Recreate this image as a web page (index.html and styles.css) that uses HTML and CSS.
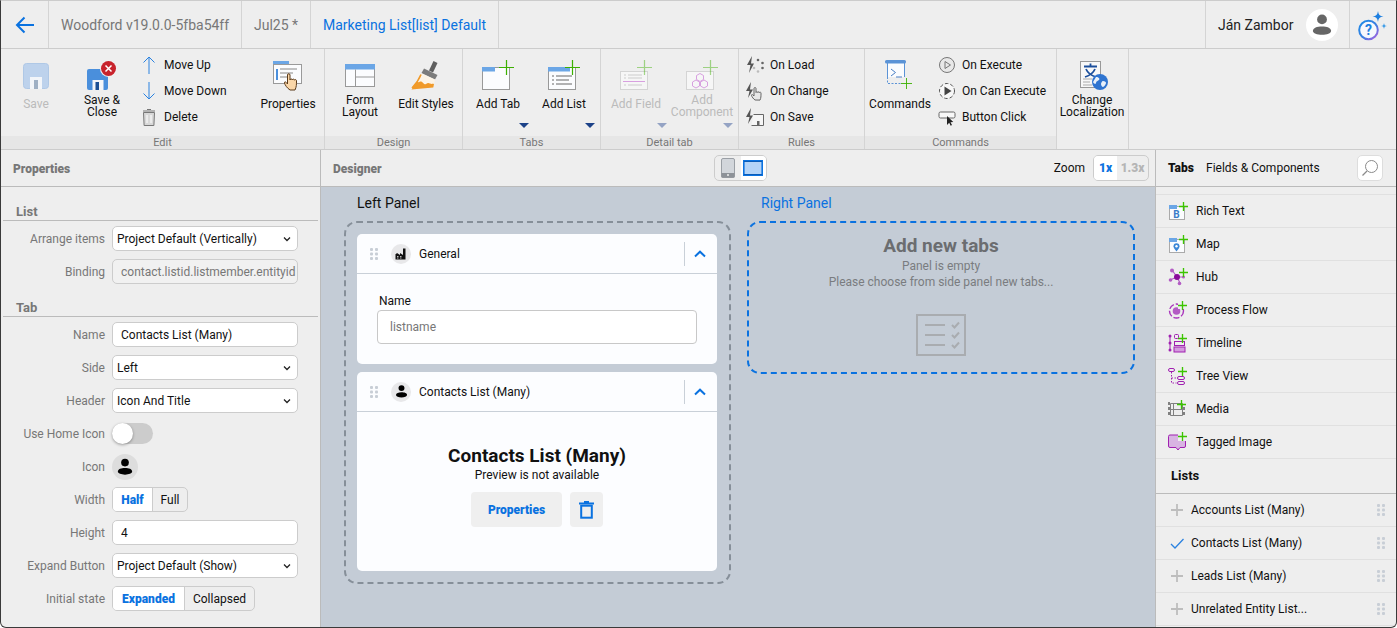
FILE: index.html
```html
<!DOCTYPE html>
<html lang="en">
<head>
  <meta charset="UTF-8">
  <title>Woodford Form Designer</title>
  <link rel="stylesheet" href="styles.css">
</head>
<body>

<svg class="defs" width="0" height="0">
  <defs>
    <symbol id="grip" viewBox="0 0 8 12">
      <g fill="#c8ced6">
        <rect x="0" y="0" width="3" height="3" rx="1"/><rect x="5" y="0" width="3" height="3" rx="1"/>
        <rect x="0" y="4.500" width="3" height="3" rx="1"/><rect x="5" y="4.500" width="3" height="3" rx="1"/>
        <rect x="0" y="9" width="3" height="3" rx="1"/><rect x="5" y="9" width="3" height="3" rx="1"/>
      </g>
    </symbol>
    <symbol id="person" viewBox="0 0 20 20">
      <circle cx="10" cy="6" r="3.500"/>
      <path d="M3.500 14.200c0-2.200 3-3.200 6.500-3.200s6.500 1 6.500 3.200c0 1.600-3 2.800-6.500 2.800s-6.500-1.200-6.500-2.800z"/>
    </symbol>
    <symbol id="chev" viewBox="0 0 12 8">
      <path d="M1 6.500L6 1.700l5 4.800" fill="none" stroke="#0a72e0" stroke-width="2"/>
    </symbol>
    <symbol id="gplus" viewBox="0 0 16 16">
      <path d="M8 0v16M0 8h16" stroke="#3cb000" stroke-width="1.300" fill="none"/>
    </symbol>
    <symbol id="tplus" viewBox="0 0 16 16">
      <path d="M8 0v16M0 8h16" stroke="#3cc400" stroke-width="2.400" fill="none"/>
    </symbol>
    <symbol id="splus" viewBox="0 0 14 14">
      <path d="M7 1v12M1 7h12" stroke="#bdbdbd" stroke-width="1.800" fill="none"/>
    </symbol>
  </defs>
</svg>

<div class="app">

  <!-- top bar -->
  <header class="topbar">
    <a class="back">
      <svg width="20" height="18" viewBox="0 0 20 18"><path d="M19 9H2M9.500 1.500L2 9l7.500 7.500" fill="none" stroke="#0a72e0" stroke-width="2"/></svg>
    </a>
    <div class="crumb crumb-ver">Woodford v19.0.0-5fba54ff</div>
    <div class="crumb crumb-jul">Jul25 *</div>
    <div class="crumb crumb-form">Marketing List[list] Default</div>
    <div class="topbar-user">
      <span class="user-name">Ján Zambor</span>
      <span class="avatar"><svg width="28" height="28" fill="#666"><use href="#person"/></svg></span>
    </div>
    <div class="topbar-help">
      <svg width="32" height="32" viewBox="0 0 32 32">
        <defs><linearGradient id="ring" x1="0" y1="0" x2="1" y2="1"><stop offset="0" stop-color="#1d8be8"/><stop offset=".55" stop-color="#3a7fe0"/><stop offset="1" stop-color="#b35fe0"/></linearGradient></defs>
        <circle cx="11.500" cy="20" r="9.300" fill="#f6f8fc" stroke="url(#ring)" stroke-width="2"/>
        <text x="11.500" y="25" text-anchor="middle" class="help-q">?</text>
        <path d="M21 1c.7 4 1.500 4.800 5.500 5.500-4 .7-4.800 1.500-5.500 5.500-.7-4-1.500-4.800-5.500-5.500 4-.7 4.800-1.500 5.500-5.500z" fill="#1d7fe0"/>
        <path d="M27 13c.3 2 .9 2.700 3 3-2.100.3-2.700 1-3 3-.3-2-.9-2.700-3-3 2.100-.3 2.700-1 3-3z" fill="#3a9be8"/>
      </svg>
    </div>
  </header>

  <!-- ribbon -->
  <div class="ribbon">
    <section class="group group-edit">
      <div class="group-body">
        <button class="rb-btn is-off">
          <svg class="rb-icon" viewBox="0 0 32 32"><rect x="3.500" y="3.500" width="25" height="25" rx="3" fill="#bdd2ec" stroke="#afc8e6"/><rect x="10" y="17" width="12" height="12" fill="#f2f5f9"/><rect x="14" y="20" width="4" height="9" fill="#9fb0c4"/></svg>
          <span class="rb-label">Save</span>
        </button>
        <button class="rb-btn">
          <svg class="rb-icon" viewBox="0 0 32 32"><rect x="1" y="9" width="21" height="21" rx="2" fill="#4a8fdc"/><rect x="6.500" y="20" width="11" height="10" fill="#f4f6f9"/><rect x="9.500" y="22" width="3.500" height="8" fill="#1c4f94"/><circle cx="22.500" cy="8.500" r="8.500" fill="#f0f0f0"/><circle cx="22.500" cy="8.500" r="7.500" fill="#c8232c"/><path d="M19.500 5.500l6 6M25.500 5.500l-6 6" stroke="#fff" stroke-width="1.500"/></svg>
          <span class="rb-label rb-two">Save &amp;<br>Close</span>
        </button>
        <div class="rb-col rb-col-edit">
          <div class="rb-small">
            <svg width="20" height="20" viewBox="0 0 20 20"><path d="M10 2v17M4.500 7.500L10 2l5.500 5.500" fill="none" stroke="#2a82e0" stroke-width="1"/></svg>
            <span>Move Up</span>
          </div>
          <div class="rb-small">
            <svg width="20" height="20" viewBox="0 0 20 20"><path d="M10 1v17M4.500 12.500L10 18l5.500-5.500" fill="none" stroke="#2a82e0" stroke-width="1"/></svg>
            <span>Move Down</span>
          </div>
          <div class="rb-small">
            <svg width="20" height="20" viewBox="0 0 20 20"><path d="M4.500 5.500h11l-.6 13h-9.800z" fill="#d8d8d8" stroke="#777"/><path d="M4 4h12M8 2.500h4" stroke="#777" fill="none"/><path d="M8 8v8M12 8v8" stroke="#fff"/></svg>
            <span>Delete</span>
          </div>
        </div>
        <button class="rb-btn">
          <svg class="rb-icon" viewBox="0 0 32 32"><rect x="1" y="1" width="16" height="4" fill="#6ba6e6"/><rect x="1.500" y="4.500" width="28" height="19" fill="#fbfcfe" stroke="#9a9a9a"/><rect x="4" y="9" width="2" height="11" fill="#4a8fdc"/><path d="M8 9h17M8 13h13M8 17h9" stroke="#888"/><path d="M18 30c-3-2-5-5-5.500-7-.3-1.300 1-1.500 1.800-.5l1.200 1.500v-9c0-1.700 2.500-1.700 2.500 0v5c0-1.400 2.300-1.400 2.300 0 0-1.200 2.200-1.200 2.200.2 .2-1 2-.8 2 .6 0 3.500 0 6-1.500 9.200z" fill="#fbd7a8" stroke="#5b3a1a"/></svg>
          <span class="rb-label">Properties</span>
        </button>
      </div>
      <div class="group-name">Edit</div>
    </section>

    <section class="group">
      <div class="group-body">
        <button class="rb-btn">
          <svg class="rb-icon" viewBox="0 0 32 32"><rect x="1.500" y="4.500" width="29" height="22" fill="#fbfcfe" stroke="#999"/><rect x="1" y="4" width="30" height="5.500" fill="#6ba6e6"/><path d="M11.500 9.500v17M11.500 17h19" stroke="#999"/></svg>
          <span class="rb-label rb-two">Form<br>Layout</span>
        </button>
        <button class="rb-btn">
          <svg class="rb-icon" viewBox="0 0 32 32"><path d="M23.500 1l4 2-4.500 9.500-4-2z" fill="#5f5f5f"/><path d="M14 8.500l13.500 6.500-2.500 4.500-13.500-6.500z" fill="#7c7c7c"/><path d="M11.500 13.500l13.500 6-1.500 6.500c-7 1-15 .8-22 2 4-3.500 7.500-8 10-14.500z" fill="#fdf4e6"/><path d="M7 21.500c2 2 3-1 5 .5s2 3 4 2 2-1.500 4-.5 2 0 4 .5l-.7 3.500-21.800 2z" fill="#f09a2a"/><path d="M11 14.500c-2 5-5 9.500-9 13.500" stroke="#f09a2a" stroke-width="1.600" fill="none"/></svg>
          <span class="rb-label">Edit Styles</span>
        </button>
      </div>
      <div class="group-name">Design</div>
    </section>

    <section class="group">
      <div class="group-body">
        <button class="rb-btn">
          <svg class="rb-icon" viewBox="0 0 32 32"><rect x=".5" y="7.500" width="27" height="22" fill="#fbfcfe" stroke="#999"/><rect x="0" y="7" width="13" height="4.500" fill="#6ba6e6"/><use href="#gplus" x="17" y="0" width="15" height="15"/></svg>
          <span class="rb-label">Add Tab</span>
          <i class="caret"></i>
        </button>
        <button class="rb-btn">
          <svg class="rb-icon" viewBox="0 0 32 32"><rect x=".5" y="7.500" width="27" height="22" fill="#fbfcfe" stroke="#999"/><rect x="0" y="7" width="22" height="4.500" fill="#6ba6e6"/><path d="M4 16h2M8 16h16M4 20h2M8 20h13M4 24h2M8 24h16" stroke="#666"/><use href="#gplus" x="17" y="0" width="15" height="15"/></svg>
          <span class="rb-label">Add List</span>
          <i class="caret"></i>
        </button>
      </div>
      <div class="group-name">Tabs</div>
    </section>

    <section class="group">
      <div class="group-body">
        <button class="rb-btn is-off">
          <svg class="rb-icon" viewBox="0 0 32 32"><rect x=".5" y="11.500" width="27" height="18" fill="#f6f6f6" stroke="#d4d4d4"/><path d="M8 15h14M4 15h2M8 18h14M4 18h2M8 25h14M4 25h2" stroke="#ccc"/><path d="M3 21.500h22" stroke="#d8a0e0"/><use href="#gplus" x="17" y="0" width="15" height="15" opacity=".45"/></svg>
          <span class="rb-label">Add Field</span>
          <i class="caret"></i>
        </button>
        <button class="rb-btn is-off">
          <svg class="rb-icon" viewBox="0 0 32 32"><rect x=".5" y="11.500" width="27" height="18" fill="#f6f6f6" stroke="#d4d4d4"/><g fill="none" stroke="#d8a0e0"><path d="M14 13.500l3.500 2v4l-3.500 2-3.500-2v-4z"/><path d="M10 20l3.500 2v4l-3.500 2-3.500-2v-4z"/><path d="M18 20l3.500 2v4l-3.500 2-3.500-2v-4z"/></g><use href="#gplus" x="17" y="0" width="15" height="15" opacity=".45"/></svg>
          <span class="rb-label rb-two">Add<br>Component</span>
          <i class="caret caret-two"></i>
        </button>
      </div>
      <div class="group-name">Detail tab</div>
    </section>

    <section class="group group-rules">
      <div class="group-body">
        <div class="rb-col">
          <div class="rb-small">
            <svg width="20" height="20" viewBox="0 0 20 20"><path d="M7 1L2 10h3.500L4 18l5-9.500H6z" fill="#555"/><g fill="#666"><circle cx="13" cy="5" r="1.300"/><circle cx="17.500" cy="8" r="1.300"/><circle cx="17.500" cy="13" r="1.300"/></g><g fill="#bbb"><circle cx="13" cy="16.500" r="1.300"/><circle cx="9" cy="13" r="1.300"/></g></svg>
            <span>On Load</span>
          </div>
          <div class="rb-small">
            <svg width="20" height="20" viewBox="0 0 20 20"><path d="M6 1L1 10h3.500L3 17l5-8.500H5z" fill="#555"/><path d="M10 19c-1.500-1-3-3-3.500-4.500-.3-1 .8-1.300 1.500-.5l1 1V7.500c0-1.300 2-1.300 2 0v4c0-1 1.800-1 1.800 0 0-.9 1.700-.9 1.700 .1 .1-.7 1.500-.6 1.500 .5 0 3 0 5-1 7z" fill="#e8e8e8" stroke="#666"/></svg>
            <span>On Change</span>
          </div>
          <div class="rb-small">
            <svg width="20" height="20" viewBox="0 0 20 20"><path d="M6 1L1 10h3.500L3 17l5-8.500H5z" fill="#555"/><path d="M8.500 7.500h10v11h-12" fill="#f6f6f6" stroke="#666"/><rect x="12" y="14" width="2.500" height="4" fill="#666"/></svg>
            <span>On Save</span>
          </div>
        </div>
      </div>
      <div class="group-name">Rules</div>
    </section>

    <section class="group group-cmd">
      <div class="group-body">
        <button class="rb-btn">
          <svg class="rb-icon" viewBox="0 0 32 32"><path d="M3.500 3v14M20.500 3v14" fill="none" stroke="#5b93d6"/><path d="M3.500 17v6.500h14" fill="none" stroke="#5b93d6" stroke-dasharray="2 1.500"/><rect x="4" y="3" width="16" height="14" fill="#fbfcfe"/><rect x="1" y="0" width="21" height="3.500" rx="1.500" fill="#5b93d6"/><path d="M7 9l4.500 3.500L7 16M12 17h6" fill="none" stroke="#4a7fc4"/><use href="#gplus" x="17" y="18" width="11" height="11"/></svg>
          <span class="rb-label">Commands</span>
        </button>
        <div class="rb-col">
          <div class="rb-small">
            <svg width="20" height="20" viewBox="0 0 20 20"><circle cx="10" cy="10" r="7.500" fill="#e8e8e8" stroke="#777"/><path d="M8 6.500l5.500 3.500L8 13.500z" fill="none" stroke="#777"/></svg>
            <span>On Execute</span>
          </div>
          <div class="rb-small">
            <svg width="20" height="20" viewBox="0 0 20 20"><circle cx="10" cy="10" r="7.500" fill="#f8f8f8" stroke="#555" stroke-dasharray="3.500 2"/><path d="M7.500 5.500l7 4.500-7 4.500z" fill="#444"/></svg>
            <span>On Can Execute</span>
          </div>
          <div class="rb-small">
            <svg width="20" height="20" viewBox="0 0 20 20"><rect x="2" y="5" width="16" height="6" rx="1.500" fill="#f8f8f8" stroke="#666"/><path d="M10 9v9l2.200-2.200 1.500 3 1.300-.7-1.500-2.900 2.800-.2z" fill="#222"/></svg>
            <span>Button Click</span>
          </div>
        </div>
      </div>
      <div class="group-name">Commands</div>
    </section>

    <section class="group group-loc">
      <div class="group-body">
        <button class="rb-btn">
          <svg class="rb-icon" viewBox="0 0 32 32"><rect x="4.500" y="1.500" width="20" height="26" fill="#f8f8f8" stroke="#999"/><path d="M8 6.500h13M14.500 3.500v3M10 9c1.500 3.500 5 6.500 10 8M19 9c-1.500 3.500-5 6.500-10 8" stroke="#1c4f9c" stroke-width="1.800" fill="none"/><path d="M7 19h9M7 22h7M7 25h9" stroke="#aaa"/><circle cx="24" cy="22" r="8" fill="#2f74d0"/><path d="M20 17c3 0 4 2 3 3s-3 1-3 3-3 0-3-1M27 21c2 0 3 1 3 2s-2 4-3 4-2-2-2-3 1-3 2-3z" fill="#e8f0fa"/></svg>
          <span class="rb-label rb-two">Change<br>Localization</span>
        </button>
      </div>
    </section>
  </div>

  <main class="main">

    <!-- properties panel -->
    <aside class="props">
      <div class="panel-head"><b class="panel-title">Properties</b></div>
      <div class="props-body">
        <h3 class="sec sec-list">List</h3>
        <div class="rows">
          <div class="row"><label>Arrange items</label>
            <select class="field"><option>Project Default (Vertically)</option></select></div>
          <div class="row"><label>Binding</label>
            <input class="field field-off" value="contact.listid.listmember.entityid" readonly></div>
        </div>
        <h3 class="sec">Tab</h3>
        <div class="rows">
          <div class="row"><label>Name</label>
            <input class="field" value="Contacts List (Many)"></div>
          <div class="row"><label>Side</label>
            <select class="field"><option>Left</option></select></div>
          <div class="row"><label>Header</label>
            <select class="field"><option>Icon And Title</option></select></div>
          <div class="row"><label>Use Home Icon</label>
            <span class="toggle"><i></i></span></div>
          <div class="row"><label>Icon</label>
            <span class="icon-pick"><svg width="22" height="22" fill="#000"><use href="#person"/></svg></span></div>
          <div class="row"><label>Width</label>
            <div class="seg"><span class="seg-on seg-half">Half</span><span class="seg-full">Full</span></div></div>
          <div class="row"><label>Height</label>
            <input class="field" value="4"></div>
          <div class="row"><label>Expand Button</label>
            <select class="field"><option>Project Default (Show)</option></select></div>
          <div class="row"><label>Initial state</label>
            <div class="seg"><span class="seg-on seg-exp">Expanded</span><span class="seg-col">Collapsed</span></div></div>
        </div>
      </div>
    </aside>

    <!-- designer -->
    <section class="designer">
      <div class="panel-head designer-head">
        <b class="panel-title">Designer</b>
        <div class="device">
          <span class="device-phone">
            <svg width="14" height="20" viewBox="0 0 14 20"><rect x=".5" y=".5" width="13" height="19" rx="1.500" fill="#d2d6db" stroke="#9a9fa5"/><rect x=".5" y="15" width="13" height="4.500" fill="#8d9298"/><circle cx="7" cy="17" r="1" fill="#eee"/></svg>
          </span>
          <span class="device-tablet">
            <svg width="20" height="16" viewBox="0 0 20 16"><rect x=".8" y=".8" width="18.400" height="14.400" fill="#b3d3f7" stroke="#0a72e0" stroke-width="1.600"/><path d="M1 1.500h18M1 14.500h18" stroke="#0a5cb8"/></svg>
          </span>
        </div>
        <div class="zoom">
          <span class="zoom-label">Zoom</span>
          <div class="zoom-seg"><span class="zoom-on">1x</span><span class="zoom-off">1.3x</span></div>
        </div>
      </div>

      <div class="canvas">
        <div class="col">
          <div class="col-title">Left Panel</div>
          <div class="dropzone">
            <div class="card">
              <div class="card-head">
                <svg class="card-grip" width="8" height="12"><use href="#grip"/></svg>
                <span class="card-icon">
                  <svg width="14" height="14" viewBox="0 0 14 14"><path d="M3 12.500V6l3 2V6l3 2V1.500h2.500v11z" fill="#111"/><path d="M1.500 7.500l1.500-1.500v6.500H1.500z" fill="#111"/><path d="M3 9.500h1.500M6 9.500h1.500M3 11h1.500M6 11h1.500" stroke="#e8e8ea" stroke-width=".8"/></svg>
                </span>
                <span class="card-title">General</span>
                <span class="card-toggle"><svg width="12" height="8"><use href="#chev"/></svg></span>
              </div>
              <div class="card-form">
                <div class="form-label">Name</div>
                <input class="form-input" placeholder="listname">
              </div>
            </div>
            <div class="card">
              <div class="card-head">
                <svg class="card-grip" width="8" height="12"><use href="#grip"/></svg>
                <span class="card-icon"><svg width="17" height="17" fill="#000"><use href="#person"/></svg></span>
                <span class="card-title">Contacts List (Many)</span>
                <span class="card-toggle"><svg width="12" height="8"><use href="#chev"/></svg></span>
              </div>
              <div class="card-preview">
                <div class="preview-title">Contacts List (Many)</div>
                <div class="preview-sub">Preview is not available</div>
                <div class="preview-btns">
                  <span class="btn-props">Properties</span>
                  <span class="btn-trash">
                    <svg width="15" height="18" viewBox="0 0 15 18"><path d="M0 2.500h15M5 1h5" stroke="#0a72e0" stroke-width="2" fill="none"/><rect x="2.200" y="4.700" width="10.600" height="12" fill="none" stroke="#0a72e0" stroke-width="2"/></svg>
                  </span>
                </div>
              </div>
            </div>
          </div>
        </div>

        <div class="col col-right">
          <div class="col-title">Right Panel</div>
          <div class="dropzone dropzone-empty">
            <div class="empty-title">Add new tabs</div>
            <div class="empty-text">Panel is empty</div>
            <div class="empty-text">Please choose from side panel new tabs...</div>
            <svg class="empty-icon" width="50" height="42" viewBox="0 0 50 42">
              <rect x="1" y="1" width="48" height="40" fill="none" stroke="#a9acb0" stroke-width="2"/>
              <path d="M9 11h20M9 21h20M9 31h20" stroke="#a9acb0" stroke-width="2"/>
              <path d="M36 11l2.500 2.500 4.500-5M36 21l2.500 2.500 4.500-5M36 31l2.500 2.500 4.500-5" fill="none" stroke="#a9acb0" stroke-width="2"/>
            </svg>
          </div>
        </div>
      </div>
    </section>

    <!-- toolbox -->
    <aside class="toolbox">
      <div class="panel-head toolbox-head">
        <b class="tool-tab">Tabs</b>
        <span class="tool-tab2">Fields &amp; Components</span>
        <span class="search">
          <svg width="18" height="18" viewBox="0 0 18 18"><circle cx="10.500" cy="7.500" r="6" fill="none" stroke="#8a8a8a"/><path d="M6 12l-4.500 4.500" stroke="#8a8a8a" stroke-width="1.300"/></svg>
        </span>
      </div>
      <div class="tool-list">
        <div class="tool-gap"></div>
        <div class="tool">
          <svg width="20" height="20" viewBox="0 0 20 20"><rect x="1.500" y="5.500" width="15" height="13" fill="#fbfcfe" stroke="#aaa"/><rect x="1" y="4" width="8" height="4" fill="#6ba6e6"/><text x="8.500" y="17" class="tool-b">B</text><use href="#tplus" x="11" y="1" width="9" height="9"/></svg>
          <span>Rich Text</span>
        </div>
        <div class="tool">
          <svg width="20" height="20" viewBox="0 0 20 20"><rect x="1.500" y="5.500" width="15" height="13" fill="#fbfcfe" stroke="#aaa"/><rect x="1" y="4" width="8" height="4" fill="#6ba6e6"/><path d="M8.500 17.500c-2-2.500-3-3.800-3-5.200a3 3 0 016 0c0 1.400-1 2.700-3 5.200z" fill="#3a86d6"/><circle cx="8.500" cy="12.300" r="1.200" fill="#fff"/><use href="#tplus" x="11" y="1" width="9" height="9"/></svg>
          <span>Map</span>
        </div>
        <div class="tool">
          <svg width="20" height="20" viewBox="0 0 20 20"><path d="M4 3l5 7M2 13l7-3M9 10l3 6M9 10l7 0" stroke="#b35cc4" stroke-width="1.200"/><circle cx="4" cy="3.500" r="2" fill="#b35cc4"/><circle cx="2.500" cy="13" r="1.800" fill="#b35cc4"/><circle cx="11.500" cy="16.500" r="1.800" fill="#b35cc4"/><circle cx="15.500" cy="10" r="1.500" fill="#b35cc4"/><circle cx="9" cy="10" r="3" fill="#8a0a9a"/><use href="#tplus" x="11" y="1" width="9" height="9"/></svg>
          <span>Hub</span>
        </div>
        <div class="tool">
          <svg width="20" height="20" viewBox="0 0 20 20"><circle cx="8.500" cy="11" r="7" fill="none" stroke="#a832bb" stroke-width="1.400" stroke-dasharray="6 2"/><circle cx="8.500" cy="11" r="3.800" fill="#b35cc4"/><rect x="10" y="1" width="9" height="8" fill="#eee"/><use href="#tplus" x="10" y="1" width="9" height="9"/></svg>
          <span>Process Flow</span>
        </div>
        <div class="tool">
          <svg width="20" height="20" viewBox="0 0 20 20"><path d="M2 2v16" stroke="#a020b0"/><g fill="#a020b0"><circle cx="2" cy="3" r="1.500"/><circle cx="2" cy="10" r="1.500"/><circle cx="2" cy="17" r="1.500"/></g><g fill="none" stroke="#a020b0"><rect x="6.500" y="1.500" width="4" height="4" rx="1"/><rect x="6.500" y="8.500" width="10" height="4"/></g><rect x="6" y="14" width="11" height="5" fill="#d49ade" stroke="#a020b0"/><use href="#tplus" x="10" y="1" width="9" height="9"/></svg>
          <span>Timeline</span>
        </div>
        <div class="tool">
          <svg width="20" height="20" viewBox="0 0 20 20"><g fill="none" stroke="#a020b0"><rect x=".5" y="2.500" width="6" height="3" rx="1.500"/><rect x="9.500" y="10.500" width="7" height="3" rx="1.500"/><rect x="9.500" y="15.500" width="7" height="3" rx="1.500"/><path d="M3.500 6v11h5M3.500 12h5" stroke-dasharray="1.500 1.500"/></g><use href="#tplus" x="10" y="1" width="9" height="9"/></svg>
          <span>Tree View</span>
        </div>
        <div class="tool">
          <svg width="20" height="20" viewBox="0 0 20 20"><g fill="#808080"><rect x="0" y="3" width="2" height="3"/><rect x="0" y="8" width="2" height="3"/><rect x="0" y="13" width="2" height="3"/><rect x="15" y="8" width="2" height="3"/><rect x="15" y="13" width="2" height="3"/></g><path d="M2.500 4.500h12v12h-12zM2.500 10.500h12M5.500 4v13" fill="none" stroke="#808080"/><use href="#tplus" x="9" y="1" width="9" height="9"/></svg>
          <span>Media</span>
        </div>
        <div class="tool">
          <svg width="20" height="20" viewBox="0 0 20 20"><path d="M2 3h14a1.500 1.500 0 011.500 1.500V14a1.500 1.500 0 01-1.500 1.500h-4L10 18l-2-2.500H2A1.500 1.500 0 01.500 14V4.500A1.500 1.500 0 012 3z" fill="#d8b4e2" stroke="#a020b0"/><rect x="10" y="1" width="8" height="8" fill="#eee"/><use href="#tplus" x="10" y="0" width="9" height="9"/></svg>
          <span>Tagged Image</span>
        </div>
        <div class="tool-head">Lists</div>
        <div class="list-item"><svg width="14" height="14"><use href="#splus"/></svg><span>Accounts List (Many)</span><svg class="list-grip" width="8" height="12"><use href="#grip"/></svg></div>
        <div class="list-item"><svg width="14" height="14" viewBox="0 0 14 14"><path d="M1 8l4 4L13.500 3" fill="none" stroke="#2a82e0" stroke-width="1.300"/></svg><span>Contacts List (Many)</span><svg class="list-grip" width="8" height="12"><use href="#grip"/></svg></div>
        <div class="list-item"><svg width="14" height="14"><use href="#splus"/></svg><span>Leads List (Many)</span><svg class="list-grip" width="8" height="12"><use href="#grip"/></svg></div>
        <div class="list-item"><svg width="14" height="14"><use href="#splus"/></svg><span>Unrelated Entity List...</span><svg class="list-grip" width="8" height="12"><use href="#grip"/></svg></div>
      </div>
    </aside>
  </main>
</div>

</body>
</html>
```

FILE: styles.css
```css
* {
  box-sizing: border-box;
}
html, body {
  margin: 0;
  height: 100%;
  overflow: hidden;
}
body {
  font-family: Roboto, "Liberation Sans", sans-serif;
  font-size: 12px;
  color: #111;
  background: #fff;
}
.defs {
  position: absolute;
}
.app {
  height: 628px;
  display: flex;
  flex-direction: column;
  background: #eee;
  border: 1px solid #3a3a3a;
  border-top-color: #ccc;
  border-radius: 0 0 6px 6px;
  overflow: hidden;
}

/* top bar */
.topbar {
  height: 48px;
  flex: none;
  display: flex;
  border-bottom: 1px solid #ccc;
  font-size: 14px;
  color: #777;
}
.back {
  width: 48px;
  display: flex;
  align-items: center;
  justify-content: center;
  border-right: 1px solid #d4d4d4;
}
.crumb {
  display: flex;
  align-items: center;
  border-right: 1px solid #d4d4d4;
  padding-left: 12px;
}
.crumb-ver {
  width: 193px;
}
.crumb-jul {
  width: 69px;
}
.crumb-form {
  width: 188px;
  color: #0a72e0;
}
.topbar-user {
  margin-left: auto;
  width: 144px;
  display: flex;
  align-items: center;
  padding-left: 12px;
  border-left: 1px solid #d4d4d4;
  color: #222;
}
.avatar {
  margin-left: auto;
  margin-right: 11px;
  width: 32px;
  height: 32px;
  border-radius: 50%;
  background: #fff;
  display: flex;
  align-items: center;
  justify-content: center;
}
.topbar-help {
  width: 47px;
  border-left: 1px solid #d4d4d4;
  padding: 9px 0 0 7px;
}
.help-q {
  font: bold 14px Roboto, sans-serif;
  fill: #1d7fe0;
}

/* ribbon */
.ribbon {
  height: 101px;
  flex: none;
  display: flex;
  border-bottom: 1px solid #ccc;
}
.group {
  width: 138px;
  display: flex;
  flex-direction: column;
  border-right: 1px solid #d4d4d4;
}
.group-edit {
  width: 324px;
}
.group-rules {
  width: 126px;
}
.group-cmd {
  width: 192px;
}
.group-loc {
  width: 72px;
}
.group-body {
  flex: 1;
  display: flex;
  padding-left: 2px;
}
.group-name {
  height: 13px;
  line-height: 13px;
  background: #e6e6e6;
  font-size: 11px;
  color: #777;
  text-align: center;
}
.rb-btn {
  width: 66px;
  height: 87px;
  display: flex;
  flex-direction: column;
  align-items: center;
  padding: 11px 0 0;
  border: 0;
  background: none;
  font: inherit;
  color: #111;
}
.rb-icon {
  width: 32px;
  height: 32px;
  flex: none;
}
.rb-label {
  margin-top: 6px;
  line-height: 12px;
  white-space: nowrap;
}
.rb-two {
  margin-top: 2px;
}
.is-off {
  color: #bbb;
}
.caret {
  margin-top: auto;
  margin-bottom: 8px;
  align-self: flex-end;
  margin-right: 2px;
  width: 0;
  height: 0;
  border: 5px solid transparent;
  border-bottom: 0;
  border-top: 5px solid #1c4288;
}
.is-off .caret {
  border-top-color: #94a3c4;
}
.rb-col {
  display: flex;
  flex-direction: column;
  padding-top: 3px;
  margin-left: 4px;
}
.rb-col-edit {
  width: 116px;
}
.rb-small {
  height: 26px;
  display: flex;
  align-items: center;
  gap: 5px;
  white-space: nowrap;
}

/* panels */
.main {
  flex: 1;
  min-height: 0;
  display: flex;
}
.panel-head {
  height: 37px;
  flex: none;
  display: flex;
  align-items: center;
  border-bottom: 1px solid #bbb;
}
.panel-title {
  padding-top: 1px;
  font-weight: 900;
  color: #777;
}

/* properties */
.props {
  width: 320px;
  flex: none;
  display: flex;
  flex-direction: column;
  border-right: 1px solid #bbb;
}
.props .panel-head {
  padding-left: 12px;
}
.props-body {
  padding: 0 2px;
}
.sec {
  margin: 15px 0 0;
  height: 18px;
  line-height: 18px;
  padding-left: 13px;
  font-size: 13px;
  font-weight: bold;
  color: #777;
  border-bottom: 1px solid #bbb;
}
.sec-list {
  margin-top: 16px;
}
.rows {
  display: flex;
  flex-direction: column;
  gap: 8px;
  margin-top: 5px;
}
.row {
  height: 25px;
  display: flex;
  align-items: center;
  gap: 7px;
}
.row label {
  width: 102px;
  text-align: right;
  color: #777;
  white-space: nowrap;
}
.field {
  width: 186px;
  height: 25px;
  border: 1px solid #ccc;
  border-radius: 5px;
  background-color: #fff;
  font: inherit;
  color: #111;
  padding: 0 8px;
  outline: none;
}
select.field {
  appearance: none;
  padding: 0 4px;
  background-image: url("data:image/svg+xml,%3Csvg xmlns='http://www.w3.org/2000/svg' width='8' height='6'%3E%3Cpath d='M1 1.500l3 3 3-3' fill='none' stroke='%23222' stroke-width='1.300'/%3E%3C/svg%3E");
  background-repeat: no-repeat;
  background-position: right 6px center;
}
.field-off {
  background: #f1f1f1;
  color: #777;
  padding: 0 0 0 8px;
}
.toggle {
  width: 41px;
  height: 21px;
  border-radius: 11px;
  background: #ccc;
}
.toggle i {
  display: block;
  width: 21px;
  height: 21px;
  border-radius: 50%;
  background: #fff;
  box-shadow: 0 1px 3px rgba(0, 0, 0, 0.35);
}
.icon-pick {
  width: 26px;
  height: 26px;
  border-radius: 50%;
  background: #ddd;
  display: flex;
  align-items: center;
  justify-content: center;
}
.seg {
  height: 25px;
  display: flex;
  border: 1px solid #ccc;
  border-radius: 5px;
  overflow: hidden;
}
.seg span {
  display: flex;
  align-items: center;
  justify-content: center;
}
.seg span + span {
  border-left: 1px solid #ccc;
}
.seg-on {
  background: #fff;
  color: #0a72e0;
  font-weight: 900;
}
.seg-half {
  width: 39px;
}
.seg-full {
  width: 35px;
}
.seg-exp {
  width: 71px;
}
.seg-col {
  width: 70px;
}

/* designer */
.designer {
  flex: 1;
  min-width: 0;
  display: flex;
  flex-direction: column;
}
.designer-head {
  padding-left: 12px;
}
.designer-head .panel-title {
  width: 54px;
}
.device {
  margin-left: 327px;
  width: 53px;
  height: 26px;
  display: flex;
  border: 1px solid #ccc;
  border-radius: 5px;
  overflow: hidden;
}
.device span {
  flex: 1;
  display: flex;
  align-items: center;
  justify-content: center;
}
.device-tablet {
  background: #fff;
}
.zoom {
  margin-left: auto;
  margin-right: 6px;
  display: flex;
  align-items: center;
  gap: 8px;
}
.zoom-seg {
  width: 56px;
  height: 26px;
  display: flex;
  border: 1px solid #ccc;
  border-radius: 5px;
  overflow: hidden;
  font-weight: 900;
}
.zoom-seg span {
  display: flex;
  align-items: center;
  justify-content: center;
}
.zoom-on {
  width: 23px;
  background: #fff;
  color: #0a72e0;
}
.zoom-off {
  flex: 1;
  color: #b5b5b5;
}
.canvas {
  flex: 1;
  min-height: 0;
  display: flex;
  gap: 16px;
  padding-left: 23px;
  background: #c4ccd6;
}
.col {
  width: 387px;
}
.col-right {
  width: 388px;
}
.col-title {
  height: 34px;
  padding: 8px 0 0 13px;
  line-height: 16px;
  font-size: 14px;
}
.col-right .col-title {
  padding-left: 14px;
  color: #0a72e0;
}
.dropzone {
  padding: 11px 12px 11px 11px;
  border: 2px dashed #868f99;
  border-radius: 13px;
  display: flex;
  flex-direction: column;
  gap: 8px;
}
.dropzone-empty {
  height: 153px;
  padding: 12px 0 0;
  gap: 0;
  align-items: center;
  border-color: #0a72e0;
}
.empty-title {
  font-size: 19px;
  font-weight: bold;
  line-height: 22px;
  color: #6b6d70;
}
.empty-text {
  line-height: 16px;
  color: #7a7c80;
}
.empty-title + .empty-text {
  margin-top: 1px;
}
.empty-icon {
  margin-top: 24px;
}
.card {
  background: #fcfdff;
  border-radius: 5px;
}
.card-head {
  height: 40px;
  display: flex;
  align-items: center;
  padding-left: 13px;
  border-bottom: 1px solid #c9d0d8;
}
.card-icon {
  margin-left: 13px;
  width: 20px;
  height: 20px;
  border-radius: 50%;
  background: #e8e8ea;
  display: flex;
  align-items: center;
  justify-content: center;
}
.card-title {
  margin-left: 8px;
}
.card-toggle {
  margin-left: auto;
  width: 33px;
  height: 24px;
  padding-right: 2px;
  border-left: 1px solid #c9d0d8;
  display: flex;
  align-items: center;
  justify-content: center;
}
.card-form {
  height: 90px;
  padding: 20px 20px 0;
}
.form-label {
  padding-left: 2px;
  line-height: 14px;
}
.form-input {
  display: block;
  width: 100%;
  height: 34px;
  margin-top: 2px;
  padding: 0 12px;
  border: 1px solid #c8c8c8;
  border-radius: 4px;
  background: #fff;
  font: inherit;
  outline: none;
}
.form-input::placeholder {
  color: #777;
}
.card-preview {
  height: 159px;
  display: flex;
  flex-direction: column;
  align-items: center;
  padding-top: 33px;
}
.preview-title {
  font-size: 19px;
  font-weight: bold;
  line-height: 22px;
}
.preview-sub {
  line-height: 16px;
}
.preview-btns {
  margin-top: 9px;
  display: flex;
  gap: 8px;
}
.preview-btns span {
  height: 35px;
  border-radius: 4px;
  background: #efefef;
  display: flex;
  align-items: center;
  justify-content: center;
}
.btn-props {
  width: 91px;
  color: #0a72e0;
  font-weight: 900;
}
.btn-trash {
  width: 33px;
}

/* toolbox */
.toolbox {
  width: 241px;
  flex: none;
  display: flex;
  flex-direction: column;
  border-left: 1px solid #bbb;
}
.toolbox-head {
  padding-left: 12px;
}
.tool-tab {
  width: 38px;
  font-weight: 900;
}
.search {
  margin-left: auto;
  margin-right: 13px;
  width: 26px;
  height: 26px;
  border: 1px solid #ddd;
  border-radius: 5px;
  background: #fff;
  display: flex;
  align-items: center;
  justify-content: center;
}
.tool-list {
  flex: 1;
  min-height: 0;
  overflow: hidden;
}
.tool-gap {
  height: 8px;
  border-bottom: 1px solid #e0e0e0;
}
.tool {
  height: 33px;
  display: flex;
  align-items: center;
  gap: 8px;
  padding-left: 12px;
  border-bottom: 1px solid #e0e0e0;
}
.tool-b {
  font: bold 10px Roboto, sans-serif;
  fill: #3a7cc8;
  text-anchor: middle;
}
.tool-head {
  height: 35px;
  padding: 0 0 2px 15px;
  display: flex;
  align-items: center;
  font-size: 13px;
  font-weight: bold;
  border-bottom: 1px solid #bbb;
}
.list-item {
  height: 33px;
  display: flex;
  align-items: center;
  gap: 7px;
  padding-left: 14px;
  border-bottom: 1px solid #e0e0e0;
}
.list-grip {
  margin-left: auto;
  margin-right: 11px;
}
```
